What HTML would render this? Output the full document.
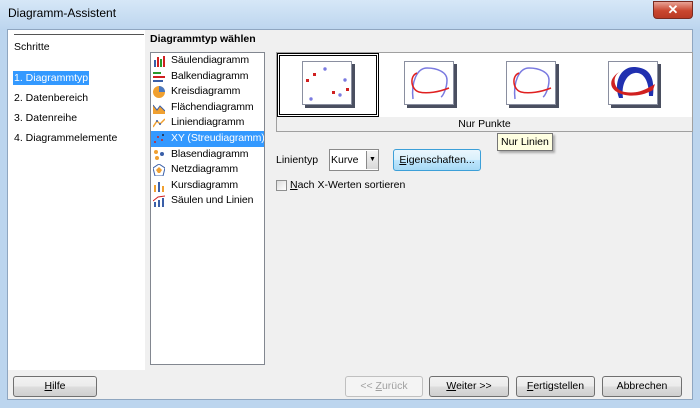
<!DOCTYPE html>
<html><head><style>
*{margin:0;padding:0;box-sizing:border-box}
body{width:700px;height:408px;overflow:hidden;background:#bcd5ee;font-family:"Liberation Sans",sans-serif;font-size:10.5px;color:#000;position:relative}
.abs{position:absolute}
.title{left:0;top:0;width:700px;height:30px;background:linear-gradient(#d6e7f7,#bcd5ee)}
.client{left:7px;top:29px;width:686px;height:371px;background:#f0f0f0;border:1px solid #8fa6c0}
.btn{position:absolute;height:21px;border:1px solid #707070;border-radius:3px;background:linear-gradient(#f2f2f2 0,#ebebeb 50%,#dddddd 51%,#cfcfcf);text-align:center;line-height:19px;font-size:10.5px}
.li{height:15.6px;line-height:15.6px;padding-left:20px;position:relative;white-space:nowrap;letter-spacing:-0.1px}
.ic{position:absolute;left:2px;top:2px;width:12px;height:12px}
.th{position:absolute;width:50px;height:44px;border:1px solid #8a8fa0;background:#fff;box-shadow:3px 3px 0 #4a4f60}
</style></head><body>
<div class="abs title"></div>
<div class="abs" style="left:8px;top:6px;font-size:12px">Diagramm-Assistent</div>
<div class="abs" style="left:653px;top:1px;width:40px;height:18px;border:1px solid #7a2a20;border-radius:0 0 4px 4px;background:linear-gradient(#e8a396,#c9462f 55%,#b93a25);color:#fff;font-weight:bold;text-align:center;line-height:16px;font-size:13px">✕</div>
<div class="abs client"></div>
<div class="abs" style="left:8px;top:30px;width:137px;height:340px;background:#fff"></div>
<div class="abs" style="left:14px;top:34px;width:130px;height:1px;background:#555"></div>
<div class="abs" style="left:14px;top:41px">Schritte</div>
<div class="abs" style="left:13px;top:71px;background:#3399ff;color:#fff;padding:0 1px;line-height:14px">1. Diagrammtyp</div>
<div class="abs" style="left:14px;top:92px">2. Datenbereich</div>
<div class="abs" style="left:14px;top:112px">3. Datenreihe</div>
<div class="abs" style="left:14px;top:132px">4. Diagrammelemente</div>
<div class="abs" style="left:150px;top:33px;font-weight:bold">Diagrammtyp wählen</div>
<div class="abs" style="left:150px;top:52px;width:115px;height:313px;background:#fff;border:1px solid #828790;overflow:hidden">
<div class="li"><svg class="ic" viewBox="0 0 12 12"><rect x="1" y="5" width="2" height="7" fill="#3a5fa8"/><rect x="4" y="2" width="2" height="10" fill="#d02020"/><rect x="7" y="4" width="2" height="8" fill="#2a9a2a"/><rect x="10" y="1" width="2" height="11" fill="#d02020"/></svg>Säulendiagramm</div>
<div class="li"><svg class="ic" viewBox="0 0 12 12"><rect x="0" y="1" width="8" height="2" fill="#2a9a2a"/><rect x="0" y="5" width="12" height="2" fill="#d02020"/><rect x="0" y="9" width="10" height="2" fill="#3a5fa8"/></svg>Balkendiagramm</div>
<div class="li"><svg class="ic" viewBox="0 0 12 12"><circle cx="6" cy="6" r="6" fill="#f0a030"/><path d="M6 6V0A6 6 0 0 1 12 6Z" fill="#4a78c0"/></svg>Kreisdiagramm</div>
<div class="li"><svg class="ic" viewBox="0 0 12 12"><path d="M0 12V3L4 8 7 4 12 9V12Z" fill="#f0a030"/><path d="M0 3L4 8 7 4 12 9" stroke="#3a5fa8" fill="none"/></svg>Flächendiagramm</div>
<div class="li"><svg class="ic" viewBox="0 0 12 12"><path d="M0 10L4 4 7 7 12 2" stroke="#f0a030" fill="none" stroke-width="1.5"/><circle cx="4" cy="4" r="1" fill="#3a5fa8"/><circle cx="7" cy="7" r="1" fill="#3a5fa8"/></svg>Liniendiagramm</div>
<div class="li" style="background:#3399ff;color:#fff"><svg class="ic" viewBox="0 0 12 12"><circle cx="2" cy="9" r="1" fill="#d02020"/><circle cx="5" cy="4" r="1" fill="#d02020"/><circle cx="9" cy="7" r="1" fill="#d02020"/><circle cx="10" cy="2" r="1" fill="#223"/></svg>XY (Streudiagramm)</div>
<div class="li"><svg class="ic" viewBox="0 0 12 12"><circle cx="3" cy="3" r="2" fill="#f0a030"/><circle cx="9" cy="5" r="2" fill="#3a5fa8"/><circle cx="4" cy="9" r="2" fill="#f0a030"/></svg>Blasendiagramm</div>
<div class="li"><svg class="ic" viewBox="0 0 12 12"><path d="M6 0L12 4 10 12H2L0 4Z" fill="none" stroke="#3a5fa8"/><path d="M6 3L9 6 7 9H5L3 6Z" fill="#f0a030"/></svg>Netzdiagramm</div>
<div class="li"><svg class="ic" viewBox="0 0 12 12"><rect x="1" y="5" width="2" height="7" fill="#f0a030"/><rect x="5" y="2" width="2" height="10" fill="#3a5fa8"/><rect x="9" y="6" width="2" height="6" fill="#f0a030"/></svg>Kursdiagramm</div>
<div class="li"><svg class="ic" viewBox="0 0 12 12"><rect x="1" y="7" width="2" height="5" fill="#3a5fa8"/><rect x="5" y="5" width="2" height="7" fill="#3a5fa8"/><rect x="9" y="3" width="2" height="9" fill="#3a5fa8"/><path d="M0 6L5 2 12 1" stroke="#d02020" fill="none"/></svg>Säulen und Linien</div>
</div>
<div class="abs" style="left:276px;top:52px;width:417px;height:80px;border:1px solid #a0a0a0;background:#f0f0f0"></div>
<div class="abs" style="left:277px;top:53px;width:415px;height:64px;background:#fff"></div>
<div class="abs" style="left:277px;top:53px;width:102px;height:64px;border:3px double #000"></div>
<div class="th" style="left:302px;top:61px"><svg width="48" height="42"><g fill="#d02020"><rect x="10" y="11" width="3" height="3"/><rect x="3" y="17" width="3" height="3"/><rect x="29" y="29" width="3" height="3"/><rect x="43" y="26" width="3" height="3"/></g><g fill="#7a7ae0"><circle cx="22" cy="7" r="1.7"/><circle cx="42" cy="18" r="1.7"/><circle cx="8" cy="37" r="1.7"/><circle cx="37" cy="33" r="1.7"/></g></svg></div>
<div class="th" style="left:404px;top:61px"><svg width="48" height="42" fill="none" stroke-width="1.5"><path d="M8 37C6 20 12 6 22 6S42 10 42 18 38 34 36 35" stroke="#7a7ae0"/><path d="M12 11C4 14 6 28 14 30S34 30 44 26" stroke="#e02020"/></svg></div>
<div class="th" style="left:506px;top:61px"><svg width="48" height="42" fill="none" stroke-width="1.5"><path d="M8 37C6 20 12 6 22 6S42 10 42 18 38 34 36 35" stroke="#7a7ae0"/><path d="M12 11C4 14 6 28 14 30S34 30 44 26" stroke="#e02020"/></svg></div>
<div class="th" style="left:608px;top:61px"><svg width="48" height="42"><path d="M10 36C4 20 12 4 26 5S46 14 44 34L40 34C40 18 34 10 26 11S12 22 14 36Z" fill="#2030b0"/><path d="M12 9C2 14 4 28 16 30S36 28 46 22L44 28C34 34 18 36 8 30S2 14 12 9Z" fill="#d02020"/></svg></div>
<div class="abs" style="left:276px;top:117px;width:417px;text-align:center;line-height:14px">Nur Punkte</div>
<div class="abs" style="left:497px;top:133px;height:18px;padding:0 3px;border:1px solid #767676;background:#ffffe1;line-height:16px;box-shadow:2px 2px 2px #aaa">Nur Linien</div>
<div class="abs" style="left:276px;top:154px">Linientyp</div>
<div class="abs" style="left:329px;top:149px;width:50px;height:22px;border:1px solid #8a8a8a;background:#fff;line-height:20px;padding-left:1px">Kurve</div>
<div class="abs" style="left:366px;top:151px;width:12px;height:18px;background:linear-gradient(#f4f4f4,#d8d8d8);border-left:1px solid #8a8a8a;text-align:center;font-size:7px;line-height:18px">▼</div>
<div class="btn" style="left:393px;top:149px;width:88px;height:22px;border-color:#3c9fd8;line-height:20px;background:linear-gradient(#eaf6fd,#d9f0fc 50%,#bee6fd 51%,#a7d9f5)"><u>E</u>igenschaften...</div>
<div class="abs" style="left:276px;top:180px;width:11px;height:11px;border:1px solid #8e8f8f;background:linear-gradient(135deg,#ddd,#fff)"></div>
<div class="abs" style="left:290px;top:179px"><u>N</u>ach X-Werten sortieren</div>
<div class="btn" style="left:13px;top:376px;width:84px"><u>H</u>ilfe</div>
<div class="btn" style="left:345px;top:376px;width:78px;color:#a0a0a0;border-color:#c0c0c0;background:#f4f4f4">&lt;&lt; <u>Z</u>urück</div>
<div class="btn" style="left:429px;top:376px;width:80px"><u>W</u>eiter &gt;&gt;</div>
<div class="btn" style="left:516px;top:376px;width:79px"><u>F</u>ertigstellen</div>
<div class="btn" style="left:602px;top:376px;width:80px">Abbrechen</div>
</body></html>
